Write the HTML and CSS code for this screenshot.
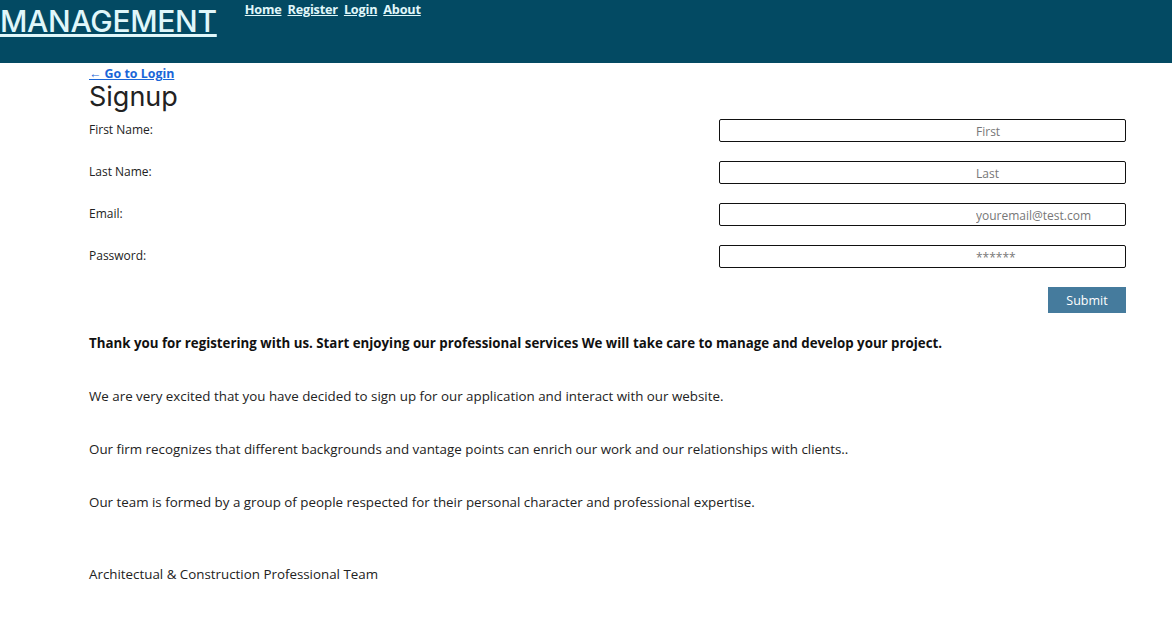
FILE: index.html
```html
<!DOCTYPE html>
<html>
<head>
<meta charset="utf-8">
<link rel="stylesheet" href="styles.css">
</head>
<body>
<header class="topbar">
  <a class="brand" href="#">MANAGEMENT</a>
  <nav class="nav">
    <a href="#">Home</a>
    <a href="#">Register</a>
    <a href="#">Login</a>
    <a href="#">About</a>
  </nav>
</header>
<main class="content">
  <a class="back" href="#">← Go to Login</a>
  <h1 class="title">Signup</h1>
  <form class="form">
    <div class="row"><label>First Name:</label><input type="text" placeholder="First"></div>
    <div class="row"><label>Last Name:</label><input type="text" placeholder="Last"></div>
    <div class="row"><label>Email:</label><input type="text" placeholder="youremail@test.com"></div>
    <div class="row"><label>Password:</label><input type="password" placeholder="******"></div>
    <div class="actions"><button type="button" class="submit">Submit</button></div>
  </form>
  <p class="thanks">Thank you for registering with us. Start enjoying our professional services We will take care to manage and develop your project.</p>
  <p class="para">We are very excited that you have decided to sign up for our application and interact with our website.</p>
  <p class="para">Our firm recognizes that different backgrounds and vantage points can enrich our work and our relationships with clients..</p>
  <p class="para">Our team is formed by a group of people respected for their personal character and professional expertise.</p>
  <p class="sign">Architectual &amp; Construction Professional Team</p>
</main>
</body>
</html>
```
FILE: styles.css
```css
* { box-sizing: border-box; }
body {
  margin: 0;
  font-family: "Open Sans", "Noto Sans", sans-serif;
  color: #222;
  background: #fff;
}
.topbar {
  background: #034a63;
  height: 63px;
  display: flex;
  align-items: flex-start;
}
.brand {
  font-family: "Inter", "Lato", sans-serif;
  font-size: 30px;
  font-weight: 500;
  color: #e0f7fa;
  line-height: 42px;
  letter-spacing: -0.3px;
}
.nav {
  display: flex;
  gap: 6px;
  margin-left: 28px;
}
.nav a {
  color: #e0f7fa;
  font-weight: 700;
  font-size: 12.7px;
  line-height: 19px;
  font-family: "Open Sans", "Noto Sans", sans-serif;
  letter-spacing: -0.2px;
}
.content {
  margin-left: 89px;
  width: 1037px;
}
.back {
  display: block;
  width: fit-content;
  margin-top: 2px;
  font-size: 12.4px;
  font-weight: 700;
  color: #1a66d8;
  line-height: 17px;
}
.title {
  font-family: "Inter", "Lato", sans-serif;
  font-weight: 400;
  font-size: 27px;
  line-height: 34px;
  margin: -2px 0 0 0;
  color: #222;
}
.form { margin-top: 5px; }
.row {
  display: grid;
  grid-template-columns: 630px minmax(0, 1fr);
  align-items: center;
  height: 23px;
  margin-bottom: 19px;
}
.row label {
  font-size: 12px;
  color: #222;
  margin-top: -3px;
}
.row input {
  width: 100%;
  min-width: 0;
  height: 23px;
  border: 1px solid #111;
  border-radius: 2px;
  padding: 1px 0 0 256px;
  font-family: "Open Sans", "Noto Sans", sans-serif;
  font-size: 12px;
  outline: none;
}
.row input::placeholder { color: #777; }
.actions {
  display: flex;
  justify-content: flex-end;
}
.submit {
  width: 78px;
  height: 26px;
  border: none;
  background: #457b9d;
  color: #fff;
  font-family: "Open Sans", "Noto Sans", sans-serif;
  font-size: 12.5px;
}
.thanks {
  font-weight: 700;
  font-size: 13.3px;
  margin: 21px 0 0 0;
  line-height: 18px;
  color: #111;
}
.para {
  font-size: 13.35px;
  line-height: 18px;
  margin: 35px 0 0 0;
}
.sign {
  font-size: 13.35px;
  line-height: 18px;
  margin: 54px 0 0 0;
}
```
